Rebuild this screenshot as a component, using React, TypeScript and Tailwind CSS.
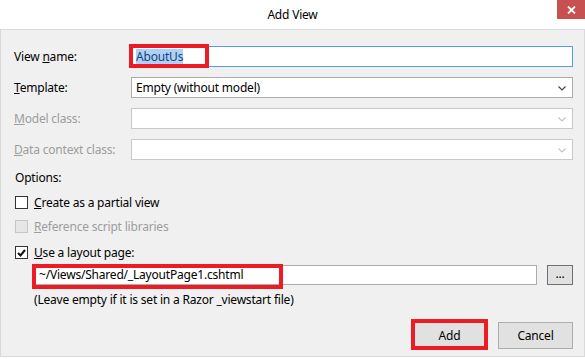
import React from 'react';

const Chevron = ({ disabled }: { disabled?: boolean }) => (
  <svg width="8" height="5" viewBox="0 0 8 5" className="absolute right-[6px] top-[8px]">
    <polyline points="0.5,0.5 4,4 7.5,0.5" fill="none" stroke={disabled ? '#c4c4c4' : '#444'} strokeWidth="1.2" />
  </svg>
);

const FieldRow = ({ label, disabled, children }: { label: React.ReactNode; disabled?: boolean; children: React.ReactNode }) => (
  <div className="flex items-center h-[21px]">
    <div className={`w-[117px] ${disabled ? 'text-[#9d9d9d]' : 'text-black'}`}>{label}</div>
    <div className="flex-1 h-full relative">{children}</div>
  </div>
);

const Select = ({ value, disabled }: { value?: string; disabled?: boolean }) => (
  <div className={`relative h-full bg-white border ${disabled ? 'border-[#c9c9c9]' : 'border-[#acacac]'} pl-[4px] leading-[19px]`}>
    {value}
    <Chevron disabled={disabled} />
  </div>
);

const Check = ({ checked, disabled, label }: { checked?: boolean; disabled?: boolean; label: React.ReactNode }) => (
  <div className="flex items-center h-[13px]">
    <div className={`w-[13px] h-[13px] mr-[6px] flex items-center justify-center border ${disabled ? 'border-[#c6c6c6] bg-[#e6e6e6]' : 'border-[#333] bg-white'}`}>
      {checked && (
        <svg width="9" height="8" viewBox="0 0 9 8">
          <polyline points="1,4 3.5,6.5 8,1" fill="none" stroke="#111" strokeWidth="2" />
        </svg>
      )}
    </div>
    <span className={disabled ? 'text-[#9d9d9d]' : 'text-black'}>{label}</span>
  </div>
);

export default function App() {
  return (
    <div className="w-[585px] h-[359px] bg-white overflow-hidden text-[12px] text-black tracking-[-0.2px]" style={{ fontFamily: '"Segoe UI", "Noto Sans", sans-serif' }}>
      <div className="relative h-[29px] flex items-center justify-center">
        <span className="text-[12px]">Add View</span>
        <div className="absolute top-0 right-0 w-[28px] h-[19px] bg-[#c75050] flex items-center justify-center">
          <svg width="9" height="8" viewBox="0 0 9 8">
            <path d="M1 0.5 L8 7.5 M8 0.5 L1 7.5" stroke="#fff" strokeWidth="1.8" />
          </svg>
        </div>
      </div>

      <div className="h-[328px] bg-[#f0f0f0] border border-[#dadada] pl-[13px] pr-[11px] pt-[16px] flex flex-col">
        <FieldRow label={<>View <u>n</u>ame:</>}>
          <div className="h-full bg-white border border-[#569de5] pl-[4px] flex items-center">
            <span className="bg-[#add1f7] text-[#1b3f78] leading-[15px]">AboutUs</span>
          </div>
          <div className="absolute -left-[2px] -top-[2px] -bottom-[1px] w-[80px] border-4 border-[#ed1c24]" />
        </FieldRow>
        <div className="mt-[10px]">
          <FieldRow label={<><u>T</u>emplate:</>}>
            <Select value="Empty (without model)" />
          </FieldRow>
        </div>
        <div className="mt-[10px]">
          <FieldRow disabled label={<><u>M</u>odel class:</>}>
            <Select disabled />
          </FieldRow>
        </div>
        <div className="mt-[10px]">
          <FieldRow disabled label={<><u>D</u>ata context class:</>}>
            <Select disabled />
          </FieldRow>
        </div>

        <div className="mt-[10px] leading-[16px] pl-[1px]">Options:</div>
        <div className="mt-[10px] pl-[1px]">
          <Check label={<><u>C</u>reate as a partial view</>} />
        </div>
        <div className="mt-[11px] pl-[1px]">
          <Check disabled label={<><u>R</u>eference script libraries</>} />
        </div>
        <div className="mt-[13px] pl-[1px]">
          <Check checked label={<><u>U</u>se a layout page:</>} />
        </div>

        <div className="mt-[6px] pl-[20px] flex items-center h-[20px] gap-[10px]">
          <div className="relative flex-1 h-full">
            <div className="h-full bg-white border border-[#acacac] pl-[4px] leading-[18px]">~/Views/Shared/_LayoutPage1.cshtml</div>
            <div className="absolute -left-[2px] -top-[1px] -bottom-[4px] w-[251px] border-4 border-[#ed1c24]" />
          </div>
          <div className="w-[26px] h-full bg-[#e1e1e1] border border-[#707070] flex items-center justify-center leading-none pb-[2px]">...</div>
        </div>
        <div className="mt-[7px] pl-[20px] leading-[16px]">(Leave empty if it is set in a Razor _viewstart file)</div>

        <div className="mt-[14px] flex justify-end gap-[11px]">
          <div className="relative w-[75px] h-[27px] bg-[#e1e1e1] border border-[#adadad] flex items-center justify-center">
            Add
            <div className="absolute -left-[2px] -right-[2px] -top-[4px] -bottom-[2px] border-4 border-[#ed1c24]" />
          </div>
          <div className="w-[75px] h-[27px] bg-[#e1e1e1] border border-[#adadad] flex items-center justify-center">Cancel</div>
        </div>
      </div>
    </div>
  );
}
